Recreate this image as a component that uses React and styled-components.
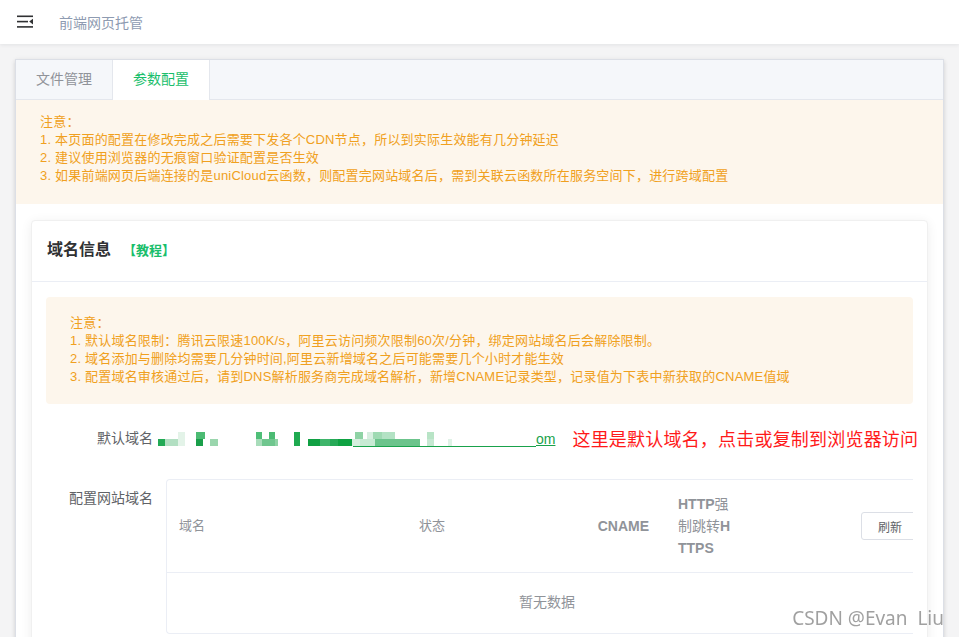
import React from 'react'
import styled, { createGlobalStyle } from 'styled-components'

const GlobalStyle = createGlobalStyle`
  html, body {
    margin: 0;
    padding: 0;
    background: #f4f4f5;
    font-family: "Liberation Sans", "Noto Sans CJK SC", sans-serif;
    overflow: hidden;
  }
  * { box-sizing: border-box; }
`

const TopBar = styled.header`
  height: 44px;
  background: #fff;
  display: flex;
  align-items: center;
  padding-left: 17px;
  box-shadow: 0 1px 4px rgba(0, 21, 41, 0.08);
  position: relative;
  z-index: 1;
`

const Title = styled.span`
  margin-left: 25px;
  font-size: 14px;
  color: #8e9bb1;
`

const Page = styled.main`
  padding: 15px 15px 0;
  height: 593px;
  overflow: hidden;
`

const Panel = styled.section`
  background: #fff;
  border: 1px solid #dcdfe6;
  box-shadow: 0 2px 4px rgba(0, 0, 0, 0.12), 0 0 6px rgba(0, 0, 0, 0.04);
  height: 600px;
`

const Tabs = styled.div`
  display: flex;
  height: 40px;
  background: #f5f7fa;
  border-bottom: 1px solid #e4e7ed;
`

const Tab = styled.div`
  padding: 0 20px;
  line-height: 39px;
  font-size: 14px;
  color: ${p => (p.active ? '#19be6b' : '#909399')};
  background: ${p => (p.active ? '#fff' : 'transparent')};
  border-right: 1px solid #e4e7ed;
  margin-bottom: -1px;
  height: 40px;
`

const Notice = styled.div`
  background: #fdf6ec;
  color: #f0a020;
  font-size: 13px;
  letter-spacing: 0.2px;
  line-height: 18px;
  padding: ${p => p.pad};
  border-radius: ${p => p.radius || '0'};
  p { margin: 0; }
`

const Body = styled.div`
  padding: 16px 15px;
`

const Card = styled.div`
  border-radius: 4px;
  border: 1px solid #f0f0f0;
  box-shadow: 0 2px 12px rgba(0, 0, 0, 0.07);
  background: #fff;
`

const CardHeader = styled.div`
  height: 61px;
  display: flex;
  align-items: center;
  padding: 0 0 6px 15px;
  border-bottom: 1px solid #ebeef5;
`

const CardTitle = styled.h3`
  margin: 0;
  font-size: 16px;
  font-weight: bold;
  color: #303133;
`

const Guide = styled.a`
  margin-left: 12px;
  font-size: 13px;
  color: #19be6b;
  font-weight: bold;
  margin-top: 2px;
`

const CardBody = styled.div`
  padding: 15px 14px 15px 14px;
`

const Form = styled.div`
  margin-top: 18px;
  display: flex;
  flex-direction: column;
  gap: 25px;
`

const Row = styled.div`
  display: flex;
  align-items: flex-start;
`

const Label = styled.label`
  width: 120px;
  flex: none;
  padding-right: 13px;
  text-align: right;
  font-size: 14px;
  line-height: 32px;
  color: #606266;
  padding-top: ${p => p.top || '0'};
`

const Content = styled.div`
  display: flex;
  align-items: center;
  height: 32px;
  white-space: nowrap;
`

const DomainLink = styled.a`
  display: inline-flex;
  align-items: flex-end;
  color: #19a24b;
  font-size: 14px;
  height: 20px;
  margin-left: -8px;
  flex: none;
  span {
    text-decoration: underline;
    line-height: 18px;
  }
`

const Annotation = styled.span`
  margin-left: 17px;
  font-size: 18px;
  letter-spacing: 0.2px;
  color: #ff1a1a;
  white-space: nowrap;
  flex: none;
`

const Table = styled.div`
  flex: 1;
  border: 1px solid #ebeef5;
  border-right: none;
  border-radius: 4px 0 0 4px;
  overflow: hidden;
  height: 155px;
`

const HeadRow = styled.div`
  display: grid;
  grid-template-columns: 240px 180px 79px 80px 1fr;
  align-items: center;
  border-bottom: 1px solid #ebeef5;
  height: 93px;
`

const HeadCell = styled.div`
  padding: ${p => p.pad || '0 12px'};
  color: #909399;
  text-align: ${p => p.align || 'left'};
  font-weight: ${p => (p.bold ? 'bold' : 'normal')};
  font-size: ${p => (p.bold ? '14px' : '13px')};
  line-height: 22px;
  word-break: break-all;
  span { font-weight: normal; }
`

const ActionCell = styled.div`
  padding-left: 115px;
  white-space: nowrap;
`

const Button = styled.button`
  height: 28px;
  padding: 0 16px;
  border: 1px solid #dcdfe6;
  border-radius: 3px;
  background: #fff;
  font-size: 12px;
  color: #606266;
  font-family: inherit;
`

const Empty = styled.div`
  height: 60px;
  line-height: 58px;
  text-align: center;
  padding-left: 14px;
  font-size: 14px;
  color: #909399;
`

const Watermark = styled.div`
  position: fixed;
  right: 15px;
  bottom: 6px;
  font-family: "Noto Sans", "DejaVu Sans", sans-serif;
  font-size: 19px;
  color: rgba(120, 120, 120, 0.7);
  white-space: pre;
`

const MenuFold = () => (
  <svg width="17" height="14" viewBox="0 0 17 14">
    <rect x="0" y="0.5" width="16" height="1.6" fill="#303133" />
    <rect x="0" y="5.8" width="11" height="1.6" fill="#303133" />
    <polygon points="16,3.8 16,9.4 12.2,6.6" fill="#303133" />
    <rect x="0" y="11.1" width="16" height="1.6" fill="#303133" />
  </svg>
)

const blocks = [
  [20, 0, 7, '#e3f3e8'], [38, 0, 9, '#4cbb73'], [98, 0, 6, '#4fbf78'], [111, 0, 6, '#4cbb73'],
  [136, 0, 6, '#1faa50'], [197, 0, 8, '#8fd3a5'], [209, 0, 6, '#d7efe0'], [215, 0, 9, '#9fdab3'],
  [224, 0, 13, '#b3e2c4'], [269, 0, 7, '#b8e4c6'],
  [0, 7, 7, '#22aa55'], [7, 7, 13, '#b2dfc2'], [20, 7, 7, '#e3f3e8'], [38, 7, 7, '#1a9f4a'],
  [52, 7, 8, '#9ad6ad'], [98, 7, 6, '#a8dcba'], [104, 7, 13, '#6fc68e'], [117, 7, 3, '#90d3a6'],
  [136, 7, 6, '#1faa50'], [150, 7, 12, '#10a043'], [162, 7, 10, '#3eb56a'], [172, 7, 8, '#26a957'],
  [180, 7, 14, '#0ea242'], [194, 7, 8, '#d5efde'], [202, 7, 15, '#c8ead4'], [217, 7, 45, '#6cc48c'],
  [269, 7, 7, '#c6e8d2'], [290, 7, 4, '#e0f2e7']
]

const Mosaic = () => (
  <svg width="378" height="16" viewBox="0 0 378 16">
    {blocks.map(([x, y, w, c], i) => (
      <rect key={i} x={x} y={y} width={w} height="7" fill={c} />
    ))}
    <line x1="195" y1="14.5" x2="378" y2="14.5" stroke="#19a24b" strokeWidth="1" />
  </svg>
)

export default function App() {
  return (
    <>
      <GlobalStyle />
      <TopBar>
        <MenuFold />
        <Title>前端网页托管</Title>
      </TopBar>
      <Page>
        <Panel>
          <Tabs>
            <Tab>文件管理</Tab>
            <Tab active>参数配置</Tab>
          </Tabs>
          <Notice pad="13px 24px 19px">
            <p>注意：</p>
            <p>1. 本页面的配置在修改完成之后需要下发各个CDN节点，所以到实际生效能有几分钟延迟</p>
            <p>2. 建议使用浏览器的无痕窗口验证配置是否生效</p>
            <p>3. 如果前端网页后端连接的是uniCloud云函数，则配置完网站域名后，需到关联云函数所在服务空间下，进行跨域配置</p>
          </Notice>
          <Body>
            <Card>
              <CardHeader>
                <CardTitle>域名信息</CardTitle>
                <Guide>【教程】</Guide>
              </CardHeader>
              <CardBody>
                <Notice pad="17px 24px 18px" radius="4px">
                  <p>注意：</p>
                  <p>1. 默认域名限制：腾讯云限速100K/s，阿里云访问频次限制60次/分钟，绑定网站域名后会解除限制。</p>
                  <p>2. 域名添加与删除均需要几分钟时间,阿里云新增域名之后可能需要几个小时才能生效</p>
                  <p>3. 配置域名审核通过后，请到DNS解析服务商完成域名解析，新增CNAME记录类型，记录值为下表中新获取的CNAME值域</p>
                </Notice>
                <Form>
                  <Row>
                    <Label>默认域名</Label>
                    <Content>
                      <DomainLink>
                        <Mosaic />
                        <span>om</span>
                      </DomainLink>
                      <Annotation>这里是默认域名，点击或复制到浏览器访问</Annotation>
                    </Content>
                  </Row>
                  <Row>
                    <Label top="3px">配置网站域名</Label>
                    <Table>
                      <HeadRow>
                        <HeadCell>域名</HeadCell>
                        <HeadCell>状态</HeadCell>
                        <HeadCell bold align="right" pad="0 17px 0 0">CNAME</HeadCell>
                        <HeadCell bold>HTTP<span>强制跳转</span>HTTPS</HeadCell>
                        <ActionCell>
                          <Button>刷新</Button>
                        </ActionCell>
                      </HeadRow>
                      <Empty>暂无数据</Empty>
                    </Table>
                  </Row>
                </Form>
              </CardBody>
            </Card>
          </Body>
        </Panel>
      </Page>
      <Watermark>CSDN @Evan  Liu</Watermark>
    </>
  )
}
